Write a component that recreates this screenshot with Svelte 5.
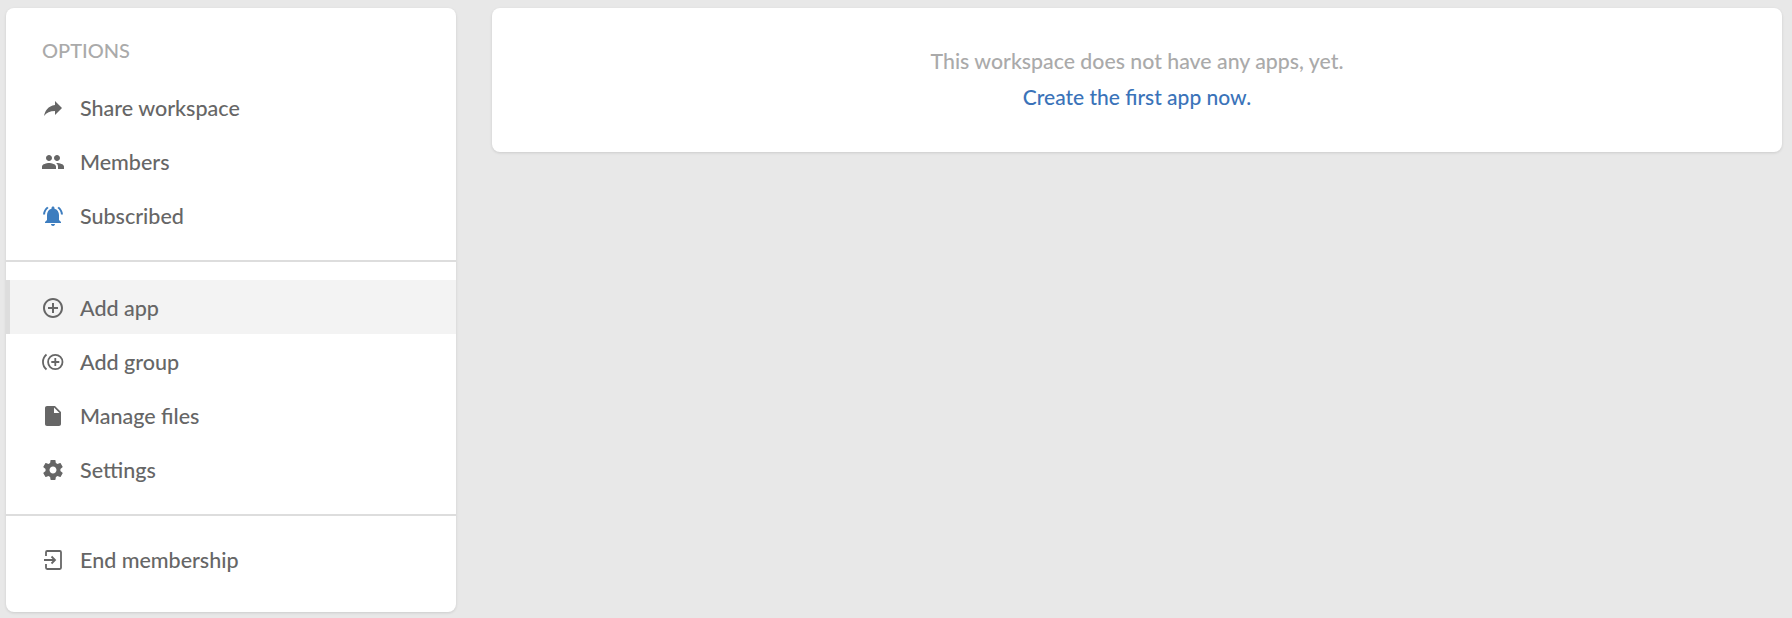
<script>
  const icons = {
    share: 'M14 9V5l7 7-7 7v-4.1c-5 0-8.5 1.6-11 5.1 1-5 4-10 11-11z',
    people: 'M16 11c1.66 0 2.99-1.34 2.99-3S17.66 5 16 5c-1.66 0-3 1.34-3 3s1.34 3 3 3zm-8 0c1.66 0 2.99-1.34 2.99-3S9.66 5 8 5C6.34 5 5 6.34 5 8s1.34 3 3 3zm0 2c-2.33 0-7 1.17-7 3.5V19h14v-2.5c0-2.33-4.67-3.5-7-3.5zm8 0c-.29 0-.62.02-.97.05 1.16.84 1.97 1.97 1.97 3.45V19h6v-2.5c0-2.33-4.67-3.5-7-3.5z',
    bell: 'M7.58 4.08L6.15 2.65C3.75 4.48 2.17 7.3 2.03 10.5h2c.15-2.65 1.51-4.97 3.55-6.42zm12.39 6.42h2c-.15-3.2-1.73-6.02-4.12-7.85l-1.42 1.43c2.02 1.45 3.39 3.77 3.54 6.42zM18 11c0-3.07-1.64-5.64-4.5-6.32V4c0-.83-.67-1.5-1.5-1.5s-1.5.67-1.5 1.5v.68C7.63 5.36 6 7.92 6 11v5l-2 2v1h16v-1l-2-2v-5zm-6 11c.14 0 .27-.01.4-.04.65-.14 1.18-.58 1.44-1.18.1-.24.15-.5.15-.78h-4c.01 1.1.9 2 2.01 2z',
    add: 'M13 7h-2v4H7v2h4v4h2v-4h4v-2h-4V7zm-1-5C6.48 2 2 6.48 2 12s4.48 10 10 10 10-4.48 10-10S17.52 2 12 2zm0 18c-4.41 0-8-3.59-8-8s3.59-8 8-8 8 3.59 8 8-3.59 8-8 8z',
    file: 'M6 2c-1.1 0-1.99.9-1.99 2L4 20c0 1.1.89 2 1.99 2H18c1.1 0 2-.9 2-2V8l-6-6H6zm7 7V3.5L18.5 9H13z',
    gear: 'M19.4 13c.04-.32.07-.66.07-1s-.03-.68-.07-1l2.11-1.65c.19-.15.24-.42.12-.64l-2-3.46c-.12-.22-.39-.3-.61-.22l-2.49 1c-.52-.4-1.08-.73-1.69-.98l-.38-2.65C14.46 2.18 14.25 2 14 2h-4c-.25 0-.46.18-.49.42l-.38 2.65c-.61.25-1.17.59-1.69.98l-2.49-1c-.23-.09-.49 0-.61.22l-2 3.46c-.13.22-.07.49.12.64L4.57 11c-.04.32-.07.67-.07 1s.03.68.07 1l-2.11 1.65c-.19.15-.24.42-.12.64l2 3.46c.12.22.39.3.61.22l2.49-1c.52.4 1.08.73 1.69.98l.38 2.65c.03.24.24.42.49.42h4c.25 0 .46-.18.49-.42l.38-2.65c.61-.25 1.17-.59 1.69-.98l2.49 1c.23.09.49 0 .61-.22l2-3.46c.12-.22.07-.49-.12-.64L19.4 13zM12 15.5c-1.93 0-3.5-1.57-3.5-3.5s1.57-3.5 3.5-3.5 3.5 1.57 3.5 3.5-1.57 3.5-3.5 3.5z'
  };

  const top = [
    { icon: 'share', label: 'Share workspace' },
    { icon: 'people', label: 'Members' },
    { icon: 'bell', label: 'Subscribed', on: true }
  ];
  const mid = [
    { icon: 'add', label: 'Add app', hover: true, low: true },
    { icon: 'group', label: 'Add group', low: true },
    { icon: 'file', label: 'Manage files', low: true },
    { icon: 'gear', label: 'Settings', low: true }
  ];
</script>

{#snippet row(item)}
  <a href="#top" class="row" class:hover={item.hover} class:on={item.on} class:low={item.low}>
    <svg viewBox="0 0 24 24" width="24" height="24">
      {#if item.icon === 'group'}
        <circle class="line" cx="14.300" cy="12" r="7.200" />
        <path d="M14.300 8v8M10.300 12h8" class="line" />
        <path d="M5.500 4.500C.8 8.500.8 15.500 5.500 19.500" class="line" />
      {:else if item.icon === 'exit'}
        <path d="M5 8V4.200C5 3.500 5.500 3 6.200 3h12.600c.7 0 1.200.5 1.200 1.200v15.600c0 .7-.5 1.200-1.200 1.200H6.200C5.500 21 5 20.500 5 19.800V16" class="line" />
        <path d="M3 12h10.500M10.500 8.500l3.500 3.500-3.500 3.500" class="line" />
      {:else}
        <path d={icons[item.icon]} />
      {/if}
    </svg>
    <span>{item.label}</span>
  </a>
{/snippet}

<div class="page">
  <aside class="side">
    <h4>OPTIONS</h4>
    {#each top as item}
      {@render row(item)}
    {/each}
    <hr class="first" />
    {#each mid as item}
      {@render row(item)}
    {/each}
    <hr class="second" />
    {@render row({ icon: 'exit', label: 'End membership', low: true })}
  </aside>
  <main class="main">
    <p>This workspace does not have any apps, yet.</p>
    <a href="#top">Create the first app now.</a>
  </main>
</div>

<style>
  :global(body) {
    background: #e8e8e8;
  }

  .page {
    display: flex;
    align-items: flex-start;
    gap: 36px;
    padding: 8px 10px 6px 6px;
    font-family: Lato, "Open Sans", sans-serif;
    font-size: 21.5px;
    font-weight: 500;
    line-height: 30px;
  }

  .side {
    width: 450px;
    flex: none;
    height: 604px;
    box-sizing: border-box;
    padding-top: 27px;
    background: #fff;
    border-radius: 8px;
    box-shadow: 0 1px 3px rgba(0, 0, 0, 0.12);
  }

  h4 {
    margin: 0 0 16px;
    padding-left: 36px;
    font-size: 20px;
    font-weight: 500;
    color: #aaa;
  }

  hr {
    height: 2px;
    margin: 0;
    border: none;
    background: #ddd;
  }

  hr.first {
    margin: 17px 0 18px;
  }

  hr.second {
    margin: 18px 0 16px;
  }

  .row {
    display: flex;
    align-items: center;
    gap: 15px;
    height: 54px;
    box-sizing: border-box;
    padding-left: 35px;
    color: #666;
    text-decoration: none;
  }

  .row.low {
    padding-top: 2px;
  }

  .row svg {
    fill: #666;
    flex: none;
  }

  .row.on svg {
    fill: #3d7dbf;
  }

  .row.hover {
    padding-left: 31px;
    background: #f3f3f3;
    border-left: 4px solid #ddd;
  }

  .line {
    fill: none;
    stroke: #666;
    stroke-width: 1.800;
  }

  .main {
    flex: 1;
    height: 144px;
    box-sizing: border-box;
    padding-top: 38px;
    text-align: center;
    font-size: 21.300px;
    background: #fff;
    border-radius: 8px;
    box-shadow: 0 1px 3px rgba(0, 0, 0, 0.12);
  }

  .main p {
    margin: 0 0 6px;
    color: #aaa;
  }

  .main a {
    font-size: 21px;
    color: #3a73b9;
    text-decoration: none;
  }
</style>
